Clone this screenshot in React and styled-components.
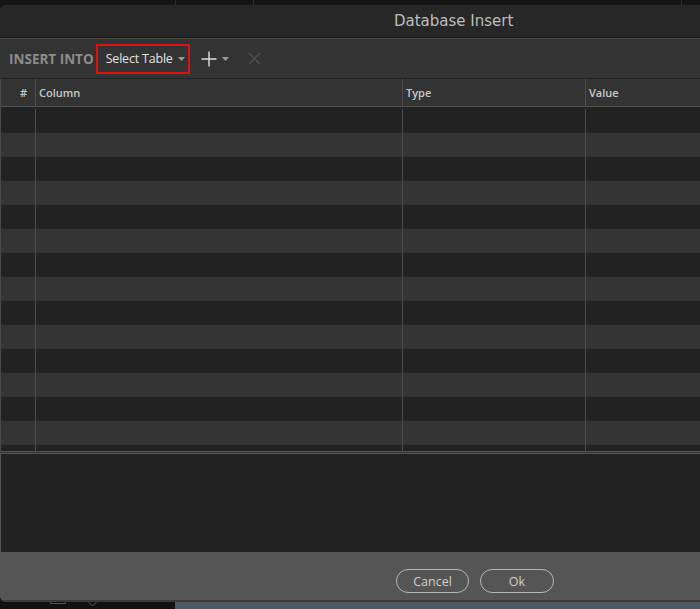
import React from "react";
import styled, { createGlobalStyle } from "styled-components";

const Global = createGlobalStyle`
  html, body {
    margin: 0;
    padding: 0;
    background: #121212;
    overflow: hidden;
  }
  body {
    font-family: "Open Sans", "Liberation Sans", sans-serif;
  }
`;

const Page = styled.div`
  display: flex;
  flex-direction: column;
  width: 700px;
  height: 609px;
  overflow: hidden;
`;

const TopStrip = styled.div`
  height: 5px;
  flex: none;
  display: flex;
  background: #141414;
`;

const StripCell = styled.div`
  width: ${(p) => p.w}px;
  flex: none;
  border-right: 1px solid #2c2c2c;
`;

const Dialog = styled.div`
  width: 908px;
  flex: none;
  display: flex;
  flex-direction: column;
  background: #2f2f2f;
  border-radius: 6px;
  overflow: hidden;
`;

const TitleBar = styled.div`
  height: 32px;
  display: flex;
  align-items: center;
  padding-left: 394px;
  background: #272727;
  border-bottom: 1px solid #1a1a1a;
  color: #bdbdbd;
  font-family: "DejaVu Sans", "Liberation Sans", sans-serif;
  font-size: 15px;
`;

const Toolbar = styled.div`
  height: 39px;
  display: flex;
  align-items: center;
  padding-left: 9px;
  background: #333333;
  border-top: 1px solid #474747;
  border-bottom: 1px solid #222;
`;

const Label = styled.span`
  font-weight: 700;
  font-size: 13.5px;
  color: #8c8c8c;
  margin-right: 2px;
`;

const SelectButton = styled.div`
  box-sizing: border-box;
  height: 30px;
  width: 94px;
  display: flex;
  align-items: center;
  padding-left: 8px;
  gap: 5px;
  border: 2px solid #e01010;
  color: #e2e2e2;
  font-size: 12.5px;
  letter-spacing: -0.2px;
`;

const IconButton = styled.div`
  display: flex;
  align-items: center;
  gap: 5px;
  margin-left: ${(p) => p.ml}px;
`;

const Caret = () => (
  <svg width="7" height="4" viewBox="0 0 7 4">
    <path d="M0 0 H7 L3.5 4 Z" fill="#9a9a9a" />
  </svg>
);

const Table = styled.div`
  display: flex;
  flex-direction: column;
  border-left: 1px solid #4a4a4a;
  border-bottom: 1px solid #575757;
`;

const Row = styled.div`
  display: grid;
  grid-template-columns: 35px 367px 183px 1fr;
  height: ${(p) => p.h}px;
  background: ${(p) => (p.light ? "#343434" : "#222222")};
`;

const HeadRow = styled(Row)`
  background: #333333;
  border-bottom: 1px solid #525252;
`;

const Cell = styled.div`
  border-right: 1px solid #4d4d4d;
  display: flex;
  align-items: center;
  justify-content: ${(p) => (p.right ? "flex-end" : "flex-start")};
  padding: 0 ${(p) => (p.right ? "8px" : "0")} 0 ${(p) => (p.right ? "0" : "3px")};
  font-size: 11px;
  font-weight: 600;
  color: #c8c8c8;
  &:last-child {
    border-right: none;
  }
`;

const Body = styled.div`
  height: 344px;
  padding-top: 2px;
  box-sizing: border-box;
  background: #222222;
  display: flex;
  flex-direction: column;
`;

const Notes = styled.div`
  margin-top: 1px;
  height: 98px;
  background: #222222;
  border: 1px solid #565656;
  border-right: none;
`;

const Footer = styled.div`
  height: 49px;
  display: flex;
  align-items: flex-start;
  gap: 11px;
  padding: 16px 0 0 396px;
  box-sizing: border-box;
  background: #555555;
  border-bottom: 2px solid #3a3a3a;
`;

const PillButton = styled.button`
  box-sizing: border-box;
  width: ${(p) => p.w}px;
  height: 24px;
  border-radius: 12px;
  border: 1px solid #b8b8b8;
  background: transparent;
  color: #cfcfcf;
  font-family: "Open Sans", "Liberation Sans", sans-serif;
  font-size: 12.5px;
  padding: 0;
`;

const BottomStrip = styled.div`
  flex: 1;
  display: flex;
  background: #111111;
`;

const Dock = styled.div`
  width: 175px;
  display: flex;
  align-items: flex-start;
  gap: 22px;
  padding-left: 50px;
  box-sizing: border-box;
`;

const Desktop = styled.div`
  flex: 1;
  background: #4b5a63;
`;

const rows = Array.from({ length: 14 }, (_, i) => i);

export default function App() {
  return (
    <>
      <Global />
      <Page>
        <TopStrip>
          <StripCell w={175} />
          <StripCell w={77} />
          <StripCell w={427} />
        </TopStrip>
        <Dialog>
          <TitleBar>Database Insert</TitleBar>
          <Toolbar>
            <Label>INSERT INTO</Label>
            <SelectButton>
              Select Table
              <Caret />
            </SelectButton>
            <IconButton ml={11}>
              <svg width="16" height="16" viewBox="0 0 16 16">
                <path d="M8 0.5 V15.5 M0.5 8 H15.5" stroke="#e0e0e0" strokeWidth="1.4" />
              </svg>
              <Caret />
            </IconButton>
            <IconButton ml={19}>
              <svg width="13" height="13" viewBox="0 0 13 13">
                <path d="M1 1 L12 12 M12 1 L1 12" stroke="#555" strokeWidth="1.2" />
              </svg>
            </IconButton>
          </Toolbar>
          <Table>
            <HeadRow h={27}>
              <Cell right>#</Cell>
              <Cell>Column</Cell>
              <Cell>Type</Cell>
              <Cell>Value</Cell>
            </HeadRow>
            <Body>
              {rows.map((i) => (
                <Row key={i} h={24} light={i % 2 === 1}>
                  <Cell />
                  <Cell />
                  <Cell />
                  <Cell />
                </Row>
              ))}
              <Row h={6}>
                <Cell />
                <Cell />
                <Cell />
                <Cell />
              </Row>
            </Body>
          </Table>
          <Notes />
          <Footer>
            <PillButton w={73}>Cancel</PillButton>
            <PillButton w={74}>Ok</PillButton>
          </Footer>
        </Dialog>
        <BottomStrip>
          <Dock>
            <svg width="16" height="4" viewBox="0 0 16 4">
              <path d="M0.5 0 V1.5 H15.5 V0" stroke="#555" fill="none" />
            </svg>
            <svg width="9" height="5" viewBox="0 0 9 5">
              <path d="M0.5 0 L4.5 4 L8.5 0" stroke="#555" fill="none" />
            </svg>
          </Dock>
          <Desktop />
        </BottomStrip>
      </Page>
    </>
  );
}
